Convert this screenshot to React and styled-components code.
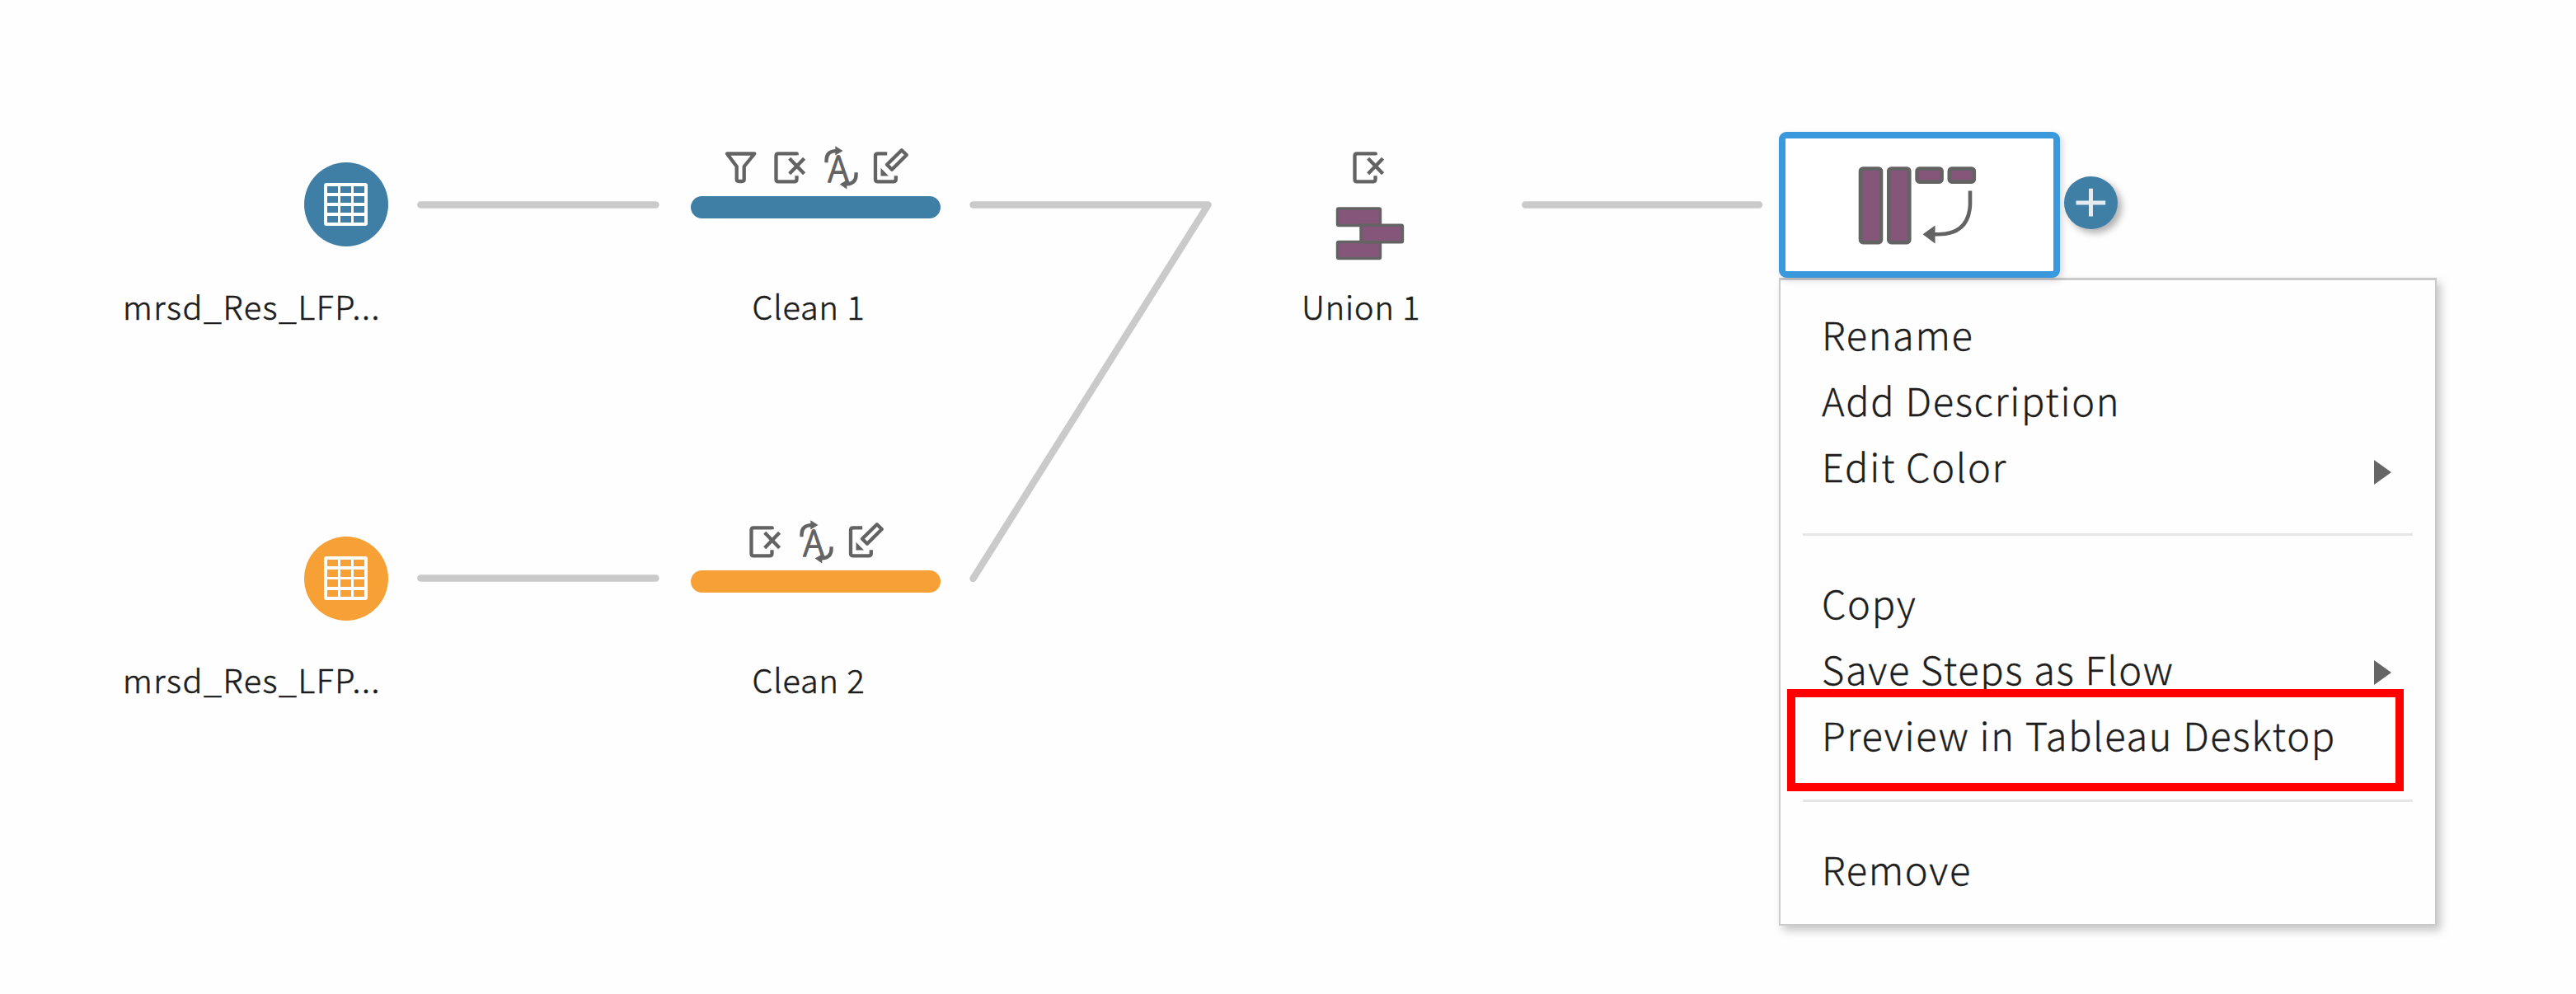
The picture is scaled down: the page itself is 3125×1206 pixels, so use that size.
import React from "react";
import styled, { createGlobalStyle } from "styled-components";

const INK = "#636363";
const PLUM = "#85567a";
const BLUE = "#3f7fa6";
const ORANGE = "#f6a035";

const GlobalStyle = createGlobalStyle`
  *, *::before, *::after { box-sizing: border-box; }
  body {
    margin: 0;
    background: #fefefe;
    font-family: "Noto Sans CJK SC", "Noto Sans", sans-serif;
    font-weight: 300;
  }
`;

const Canvas = styled.main`
  position: relative;
  width: 3125px;
  height: 1206px;
  overflow: hidden;
  background: #fefefe;
`;

const Edges = styled.svg`
  position: absolute;
  inset: 0;
  width: 100%;
  height: 100%;
  fill: none;
  stroke: #cacaca;
  stroke-width: 8.4px;
  stroke-linecap: round;
  stroke-linejoin: round;
`;

/* Nodes are pinned to their spot on the flow canvas. */
const Node = styled.section`
  position: absolute;
  left: ${(p) => p.$x}px;
  top: ${(p) => p.$y}px;
  width: ${(p) => p.$w}px;
  display: flex;
  flex-direction: column;
  align-items: ${(p) => p.$align || "center"};
`;

const NodeLabel = styled.span`
  align-self: flex-start;
  margin-top: ${(p) => p.$gap}px;
  margin-left: ${(p) => p.$indent || 0}px;
  font-size: 39.5px;
  line-height: 50px;
  letter-spacing: ${(p) => p.$tracking || 0.9}px;
  white-space: nowrap;
  color: #1c1c1c;
  -webkit-text-stroke: 0.6px #1c1c1c;
`;

const SourceDisc = styled.div`
  display: flex;
  align-items: center;
  justify-content: center;
  width: 102px;
  height: 102px;
  border-radius: 50%;
  background: ${(p) => p.$color};
`;

const TableGrid = styled.div`
  display: grid;
  grid-template-columns: repeat(3, 12.4px);
  grid-template-rows: repeat(4, 8.4px);
  gap: 3.8px;
  padding: 3.8px;
  border-radius: 3px;
  background: #ffffff;
`;

const TableCell = styled.i`
  background: ${(p) => p.$color};
`;

const ChangeIcons = styled.div`
  display: flex;
  height: 60px;
  margin-left: ${(p) => p.$nudge || 0}px;
`;

const ChangeIcon = styled.svg`
  width: 60px;
  height: 60px;
  overflow: visible;
  fill: none;
  stroke: ${INK};
  stroke-width: 4.3px;
  stroke-linejoin: round;
`;

const IconLetter = styled.text`
  font-size: 43.5px;
  font-weight: 300;
  text-anchor: middle;
  fill: ${INK};
  stroke: ${INK};
  stroke-width: 1.5px;
`;

const StepBar = styled.div`
  width: 303px;
  height: 27px;
  margin-top: 8px;
  border-radius: 13.5px;
  background: ${(p) => p.$color};
`;

const UnionGlyph = styled.svg`
  width: 84px;
  height: 66px;
  margin-top: 20px;
  fill: ${PLUM};
  stroke: ${INK};
  stroke-width: 3.4px;
`;

const SelectedStep = styled.section`
  position: absolute;
  left: 2158px;
  top: 160px;
  width: 341px;
  height: 177px;
  display: flex;
  align-items: center;
  justify-content: center;
  padding-right: 6px;
  border: 8px solid #3a99dc;
  border-radius: 9px;
  background: #fff;
  box-shadow: 3px 3px 8px rgba(0, 0, 0, 0.15);
`;

const PivotGlyph = styled.svg`
  width: 144px;
  height: 96px;
  fill: ${PLUM};
  stroke: ${INK};
  stroke-width: 4.6px;
`;

const AddStep = styled.button`
  position: absolute;
  left: 2504px;
  top: 214px;
  width: 65px;
  height: 64px;
  padding: 0;
  border: 0;
  border-radius: 50%;
  background: ${BLUE};
  box-shadow: 5px 5px 9px rgba(0, 0, 0, 0.3);

  svg {
    display: block;
    width: 65px;
    height: 64px;
    stroke: #e4ebf3;
    stroke-width: 5px;
  }
`;

const Menu = styled.nav`
  position: absolute;
  left: 2158px;
  top: 337px;
  width: 798px;
  height: 786px;
  display: flex;
  flex-direction: column;
  padding-top: 25px;
  border: 2px solid #cacaca;
  border-top-width: 3px;
  background: #fefefe;
  box-shadow: 5px 6px 10px rgba(0, 0, 0, 0.22);
`;

const MenuItem = styled.div`
  position: relative;
  display: flex;
  align-items: center;
  justify-content: space-between;
  flex: none;
  height: 80px;
  padding: 0 53px 0 50px;
  font-size: 47px;
  line-height: 80px;
  letter-spacing: 1.65px;
  white-space: nowrap;
  color: #1e1e1e;
  -webkit-text-stroke: 0.35px #1e1e1e;
`;

const Divider = styled.hr`
  flex: none;
  height: 3px;
  margin: ${(p) => p.$above}px 27px 41px;
  border: 0;
  background: #e6e6e6;
`;

const SubmenuArrow = styled.i`
  width: 0;
  height: 0;
  margin-top: ${(p) => p.$drop}px;
  border-style: solid;
  border-width: 15.5px 0 15.5px 21px;
  border-color: transparent transparent transparent #666;
`;

const Highlight = styled.span`
  position: absolute;
  left: 8px;
  top: -15px;
  width: 748px;
  height: 124px;
  border: 10px solid #ff0000;
  pointer-events: none;
`;

const Filter = () => (
  <ChangeIcon viewBox="0 0 60 60">
    <path d="M13 16.5H46.3L33.7 32V47.5Q33.7 50 31 50H27.5Q24.7 50 24.7 47.5V32Z" />
  </ChangeIcon>
);

const RemoveField = () => (
  <ChangeIcon viewBox="0 0 60 60">
    <path d="M37.7 18.3V16.4H15Q12.5 16.4 12.5 19V47.5Q12.5 50.3 15 50.3H34.5Q37.5 50.3 37.5 47.5V43.3" />
    <path d="M28.7 22.2L46.6 40.8M46.6 22.2L28.7 40.8" />
  </ChangeIcon>
);

const Retype = () => (
  <ChangeIcon viewBox="0 0 60 60">
    <path d="M13.5 27.3V24.5Q13.5 13.3 25.5 13.2" />
    <path d="M24.3 7.2L33.5 13L24.3 18.6Z" fill={INK} stroke="none" />
    <IconLetter x="28" y="51">A</IconLetter>
    <path d="M49.6 39.2V41.5Q49.6 53 38 53.3" />
    <path d="M38.3 48.6L29.7 53.6L38.3 59.4Z" fill={INK} stroke="none" />
  </ChangeIcon>
);

const EditValue = () => (
  <ChangeIcon viewBox="0 0 60 60">
    <path d="M27.2 16.4H16Q13 16.4 13 19V47.5Q13 50.3 16 50.3H34.5Q37.8 50.3 37.8 47.5V43.3" />
    <path d="M44.8 12.2L50.8 18L33 35.8L27 29.8Z" />
    <path d="M19.5 33.8V43.4H29Z" fill={INK} stroke="none" />
  </ChangeIcon>
);

const changeIcons = {
  filter: Filter,
  remove: RemoveField,
  retype: Retype,
  edit: EditValue,
};

function Changes({ list, nudge }) {
  return (
    <ChangeIcons $nudge={nudge}>
      {list.map((name) => {
        const Icon = changeIcons[name];
        return <Icon key={name} />;
      })}
    </ChangeIcons>
  );
}

function SourceNode({ y, color, name }) {
  return (
    <Node $x={149} $y={y} $w={321.5} $align="flex-end">
      <SourceDisc $color={color}>
        <TableGrid>
          {Array.from({ length: 12 }, (_, i) => (
            <TableCell key={i} $color={color} />
          ))}
        </TableGrid>
      </SourceDisc>
      <NodeLabel $gap={46.5} $tracking={1.6}>{name}</NodeLabel>
    </Node>
  );
}

function CleanNode({ y, color, name, changes }) {
  return (
    <Node $x={837.5} $y={y} $w={303}>
      <Changes list={changes} />
      <StepBar $color={color} />
      <NodeLabel $gap={80.5} $indent={75}>{name}</NodeLabel>
    </Node>
  );
}

export default function App() {
  return (
    <Canvas>
      <GlobalStyle />
      <Edges viewBox="0 0 3125 1206">
        <path d="M510.3 248.5H795.5" />
        <path d="M510.3 701.5H795.5" />
        <path d="M1180.5 248.5H1465.6L1180.5 702" />
        <path d="M1850.3 248.5H2134" />
      </Edges>

      <SourceNode y={197} color={BLUE} name="mrsd_Res_LFP..." />
      <CleanNode y={170} color={BLUE} name="Clean 1" changes={["filter", "remove", "retype", "edit"]} />
      <SourceNode y={650.5} color={ORANGE} name="mrsd_Res_LFP..." />
      <CleanNode y={623.5} color={ORANGE} name="Clean 2" changes={["remove", "retype", "edit"]} />

      <Node $x={1579} $y={170} $w={166}>
        <Changes list={["remove"]} nudge={-3} />
        <UnionGlyph viewBox="0 0 84 66">
          <rect x="2.5" y="3" width="52" height="20.5" rx="1.5" />
          <rect x="2.5" y="43.5" width="52" height="20" rx="1.5" />
          <rect x="31" y="23.3" width="50.5" height="20.5" rx="1.5" />
        </UnionGlyph>
        <NodeLabel $gap={30}>Union 1</NodeLabel>
      </Node>

      <Menu>
        <MenuItem>Rename</MenuItem>
        <MenuItem>Add Description</MenuItem>
        <MenuItem>Edit Color<SubmenuArrow $drop={16} /></MenuItem>
        <Divider $above={42} />
        <MenuItem>Copy</MenuItem>
        <MenuItem>Save Steps as Flow<SubmenuArrow $drop={10} /></MenuItem>
        <MenuItem>Preview in Tableau Desktop<Highlight /></MenuItem>
        <Divider $above={39} />
        <MenuItem>Remove</MenuItem>
      </Menu>

      <SelectedStep>
        <PivotGlyph viewBox="0 0 144 96">
          <rect x="3" y="3.6" width="25" height="89.5" rx="3" />
          <rect x="37.3" y="3.6" width="25" height="89.5" rx="3" />
          <rect x="71.6" y="3.6" width="30" height="16" rx="3" />
          <rect x="110.8" y="3.6" width="30" height="16" rx="3" />
          <path d="M136 30.5V47Q134.5 82.8 98 83.3H92" fill="none" />
          <path d="M78.5 83.3L93.5 72.5V94.5Z" fill={INK} stroke="none" />
        </PivotGlyph>
      </SelectedStep>
      <AddStep aria-label="Add step">
        <svg viewBox="0 0 65 64">
          <path d="M14.5 32H50.2M32.5 14.8V48.5" />
        </svg>
      </AddStep>
    </Canvas>
  );
}
